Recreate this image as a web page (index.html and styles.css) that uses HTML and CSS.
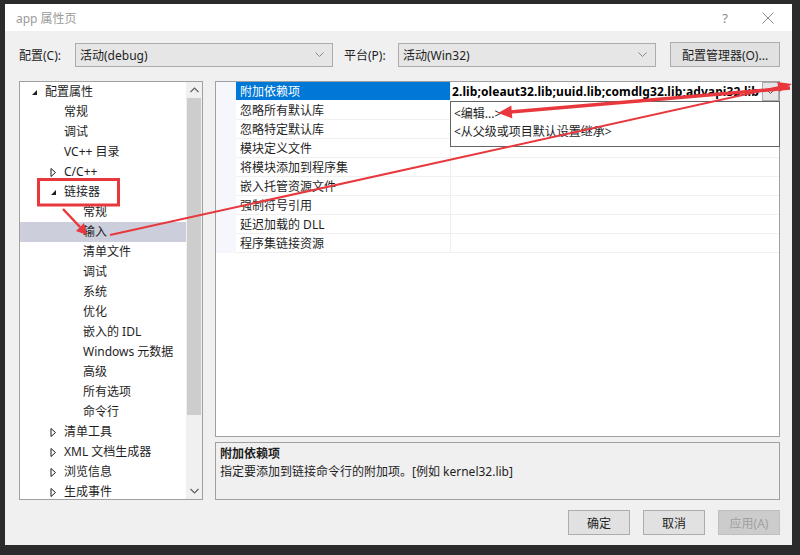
FILE: index.html
```html
<!DOCTYPE html>
<html lang="zh-CN">
<head>
<meta charset="utf-8">
<title>app 属性页</title>
<link rel="stylesheet" href="styles.css">
</head>
<body>
<div class="window">
  <div class="titlebar">
    <span class="title">app 属性页</span>
    <span class="help">?</span>
    <svg class="close" width="12" height="12" viewBox="0 0 12 12"><path d="M0.5 0.5 L11.5 11.5 M11.5 0.5 L0.5 11.5" stroke="#8a8a8a" stroke-width="1" fill="none"/></svg>
  </div>
  <div class="content">
    <div class="config-row">
      <span class="lbl lbl-config">配置(C):</span>
      <div class="select"><span>活动(debug)</span><svg class="chev" width="9" height="6" viewBox="0 0 9 6"><path d="M0.5 0.5 L4.5 4.5 L8.5 0.5" stroke="#888" fill="none"/></svg></div>
      <span class="lbl lbl-platform">平台(P):</span>
      <div class="select"><span>活动(Win32)</span><svg class="chev" width="9" height="6" viewBox="0 0 9 6"><path d="M0.5 0.5 L4.5 4.5 L8.5 0.5" stroke="#888" fill="none"/></svg></div>
      <div class="btn btn-mgr">配置管理器(O)...</div>
    </div>

    <div class="main">
      <div class="tree">
        <div class="tree-list">
          <div class="node l0"><span class="tw"><svg width="7" height="7" viewBox="0 0 7 7"><path d="M6 1 L6 6 L1 6 Z" fill="#1e1e1e"/></svg></span><span>配置属性</span></div>
          <div class="node l1"><span class="tw"></span><span>常规</span></div>
          <div class="node l1"><span class="tw"></span><span>调试</span></div>
          <div class="node l1"><span class="tw"></span><span>VC++ 目录</span></div>
          <div class="node l1"><span class="tw"><svg width="7" height="9" viewBox="0 0 7 9"><path d="M1 0.5 L5.5 4.5 L1 8.5 Z" fill="none" stroke="#1e1e1e"/></svg></span><span>C/C++</span></div>
          <div class="node l1"><span class="tw"><svg width="7" height="7" viewBox="0 0 7 7"><path d="M6 1 L6 6 L1 6 Z" fill="#1e1e1e"/></svg></span><span>链接器</span></div>
          <div class="node l2"><span class="tw"></span><span>常规</span></div>
          <div class="node l2 selected"><span class="tw"></span><span>输入</span></div>
          <div class="node l2"><span class="tw"></span><span>清单文件</span></div>
          <div class="node l2"><span class="tw"></span><span>调试</span></div>
          <div class="node l2"><span class="tw"></span><span>系统</span></div>
          <div class="node l2"><span class="tw"></span><span>优化</span></div>
          <div class="node l2"><span class="tw"></span><span>嵌入的 IDL</span></div>
          <div class="node l2"><span class="tw"></span><span>Windows 元数据</span></div>
          <div class="node l2"><span class="tw"></span><span>高级</span></div>
          <div class="node l2"><span class="tw"></span><span>所有选项</span></div>
          <div class="node l2"><span class="tw"></span><span>命令行</span></div>
          <div class="node l1"><span class="tw"><svg width="7" height="9" viewBox="0 0 7 9"><path d="M1 0.5 L5.5 4.5 L1 8.5 Z" fill="none" stroke="#1e1e1e"/></svg></span><span>清单工具</span></div>
          <div class="node l1"><span class="tw"><svg width="7" height="9" viewBox="0 0 7 9"><path d="M1 0.5 L5.5 4.5 L1 8.5 Z" fill="none" stroke="#1e1e1e"/></svg></span><span>XML 文档生成器</span></div>
          <div class="node l1"><span class="tw"><svg width="7" height="9" viewBox="0 0 7 9"><path d="M1 0.5 L5.5 4.5 L1 8.5 Z" fill="none" stroke="#1e1e1e"/></svg></span><span>浏览信息</span></div>
          <div class="node l1"><span class="tw"><svg width="7" height="9" viewBox="0 0 7 9"><path d="M1 0.5 L5.5 4.5 L1 8.5 Z" fill="none" stroke="#1e1e1e"/></svg></span><span>生成事件</span></div>
        </div>
        <div class="vscroll">
          <div class="sarrow"><svg width="9" height="6" viewBox="0 0 9 6"><path d="M0.5 5 L4.5 1 L8.5 5" stroke="#606060" fill="none" stroke-width="1.2"/></svg></div>
          <div class="strack"><div class="sthumb"></div></div>
          <div class="sarrow"><svg width="9" height="6" viewBox="0 0 9 6"><path d="M0.5 1 L4.5 5 L8.5 1" stroke="#606060" fill="none" stroke-width="1.2"/></svg></div>
        </div>
      </div>

      <div class="right">
        <div class="grid">
          <div class="row">
            <div class="gut"></div><div class="name sel">附加依赖项</div>
            <div class="val val-edit"><span class="vtext">2.lib;oleaut32.lib;uuid.lib;comdlg32.lib;advapi32.lib</span><span class="ddbtn"><svg width="9" height="6" viewBox="0 0 9 6"><path d="M0.5 0.5 L4.5 4.5 L8.5 0.5" stroke="#555" fill="none"/></svg></span></div>
          </div>
          <div class="row"><div class="gut"></div><div class="name">忽略所有默认库</div><div class="val"></div></div>
          <div class="row"><div class="gut"></div><div class="name">忽略特定默认库</div><div class="val"></div></div>
          <div class="row"><div class="gut"></div><div class="name">模块定义文件</div><div class="val"></div></div>
          <div class="row"><div class="gut"></div><div class="name">将模块添加到程序集</div><div class="val"></div></div>
          <div class="row"><div class="gut"></div><div class="name">嵌入托管资源文件</div><div class="val"></div></div>
          <div class="row"><div class="gut"></div><div class="name">强制符号引用</div><div class="val"></div></div>
          <div class="row"><div class="gut"></div><div class="name">延迟加载的 DLL</div><div class="val"></div></div>
          <div class="row"><div class="gut"></div><div class="name">程序集链接资源</div><div class="val"></div></div>
          <div class="popup">
            <div class="pitem">&lt;编辑...&gt;</div>
            <div class="pitem">&lt;从父级或项目默认设置继承&gt;</div>
          </div>
        </div>
        <div class="desc">
          <div class="desc-title">附加依赖项</div>
          <div class="desc-text">指定要添加到链接命令行的附加项。[例如 kernel32.lib]</div>
        </div>
      </div>
    </div>

    <div class="buttons">
      <div class="btn">确定</div>
      <div class="btn">取消</div>
      <div class="btn disabled">应用(A)</div>
    </div>
  </div>
</div>

<svg class="annot" width="800" height="555" viewBox="0 0 800 555">
  <rect x="38.5" y="179.5" width="80" height="25.5" fill="none" stroke="#e8383d" stroke-width="3"/>
  <line x1="63" y1="209" x2="80" y2="227" stroke="#e8383d" stroke-width="2.5"/>
  <polygon points="87,235 76,231 84,223" fill="#e8383d"/>
  <line x1="110" y1="235" x2="779" y2="87" stroke="#e8383d" stroke-width="2"/>
  <polygon points="792,84 779.4,91.9 777.2,82.1" fill="#e8383d"/>
  <line x1="790" y1="88" x2="510" y2="112" stroke="#e8383d" stroke-width="3.5"/>
  <polygon points="498,113 512.3,118.5 511.3,105.5" fill="#e8383d"/>
</svg>
</body>
</html>
```

FILE: styles.css
```css
* { box-sizing: border-box; }
html, body { margin: 0; padding: 0; }
body {
  width: 800px;
  height: 555px;
  background: #2b2b2b;
  position: relative;
  overflow: hidden;
  font-family: "Noto Sans", "Noto Sans CJK SC", sans-serif;
  font-size: 12px;
  color: #1e1e1e;
}
.window {
  margin: 4px 0 0 5px;
  width: 787px;
  height: 541px;
  background: #f0f0f0;
  display: flex;
  flex-direction: column;
}
.titlebar {
  height: 27px;
  background: #ffffff;
  display: flex;
  align-items: center;
  padding-left: 11px;
  padding-right: 18px;
}
.title { color: #9a9a9a; font-size: 12px; flex: 1; }
.help { color: #8a8a8a; font-size: 13px; margin-right: 34px; }
.close { display: block; }

.content {
  flex: 1;
  padding: 11px 12px 10px 14px;
  display: flex;
  flex-direction: column;
}
.config-row {
  height: 25px;
  display: flex;
  align-items: center;
}
.lbl { white-space: nowrap; }
.lbl-config { width: 56px; }
.lbl-platform { width: 54px; margin-left: 11px; }
.select {
  width: 258px;
  height: 24px;
  border: 1px solid #acacac;
  background: #e6e6e6;
  display: flex;
  align-items: center;
  justify-content: space-between;
  padding: 0 8px 0 4px;
}
.btn {
  border: 1px solid #adadad;
  background: #e1e1e1;
  display: flex;
  align-items: center;
  justify-content: center;
  height: 25px;
  white-space: nowrap;
}
.btn-mgr { width: 110px; margin-left: 14px; }

.main {
  margin-top: 14px;
  height: 419px;
  display: flex;
  gap: 12px;
}
.tree {
  width: 184px;
  border: 1px solid #a0a0a0;
  background: #ffffff;
  display: flex;
  overflow: hidden;
}
.tree-list {
  flex: 1;
  overflow: hidden;
}
.node {
  height: 20px;
  line-height: 20px;
  display: flex;
  align-items: center;
  white-space: nowrap;
  padding-left: 8px;
}
.node.l1 { padding-left: 27px; }
.node.l2 { padding-left: 46px; }
.node.selected { background: #cccedb; }
.tw {
  width: 17px;
  height: 20px;
  display: flex;
  align-items: center;
  padding-left: 3px;
}
.vscroll {
  width: 16px;
  background: #f0f0f0;
  display: flex;
  flex-direction: column;
}
.sarrow {
  height: 16px;
  display: flex;
  align-items: center;
  justify-content: center;
}
.strack { flex: 1; padding: 0 1px; }
.sthumb { height: 317px; background: #cdcdcd; }

.right {
  width: 565px;
  display: flex;
  flex-direction: column;
}
.grid {
  position: relative;
  height: 356px;
  border: 1px solid #a0a0a0;
  background: #ffffff;
}
.row {
  height: 19px;
  display: flex;
}
.gut { width: 20px; background: #f5f7fc; }
.name {
  width: 215px;
  border-bottom: 1px solid #f0f0f0;
  border-right: 1px solid #f0f0f0;
  padding: 1px 0 0 4px;
  line-height: 18px;
  white-space: nowrap;
}
.name.sel { background: #0078d7; color: #ffffff; border-bottom-color: #ffffff; }
.val {
  flex: 1;
  border-bottom: 1px solid #f0f0f0;
  display: flex;
  min-width: 0;
}
.val-edit { border-bottom: none; }
.vtext {
  flex: 1;
  overflow: hidden;
  white-space: nowrap;
  font-weight: bold;
  line-height: 18px;
  padding: 1px 0 0 1px;
  letter-spacing: 0.1px;
  color: #000;
}
.ddbtn {
  width: 17px;
  height: 19px;
  border: 1px solid #acacac;
  background: #e6e6e6;
  display: flex;
  align-items: center;
  justify-content: center;
}
.popup {
  position: absolute;
  left: 234px;
  top: 19px;
  width: 330px;
  height: 46px;
  border: 1px solid #646464;
  background: #ffffff;
  padding: 3px 3px;
}
.pitem { height: 18px; line-height: 18px; white-space: nowrap; }

.desc {
  margin-top: 5px;
  height: 58px;
  border: 1px solid #a0a0a0;
  background: #f0f0f0;
  padding: 2px 4px;
}
.desc-title { font-weight: bold; line-height: 18px; }
.desc-text { line-height: 18px; }

.buttons {
  margin-top: 10px;
  display: flex;
  justify-content: flex-end;
  gap: 13px;
}
.buttons .btn { width: 62px; }
.btn.disabled { background: #cccccc; border-color: #bfbfbf; color: #a0a0a0; }

.annot {
  position: absolute;
  left: 0;
  top: 0;
  pointer-events: none;
}
```
